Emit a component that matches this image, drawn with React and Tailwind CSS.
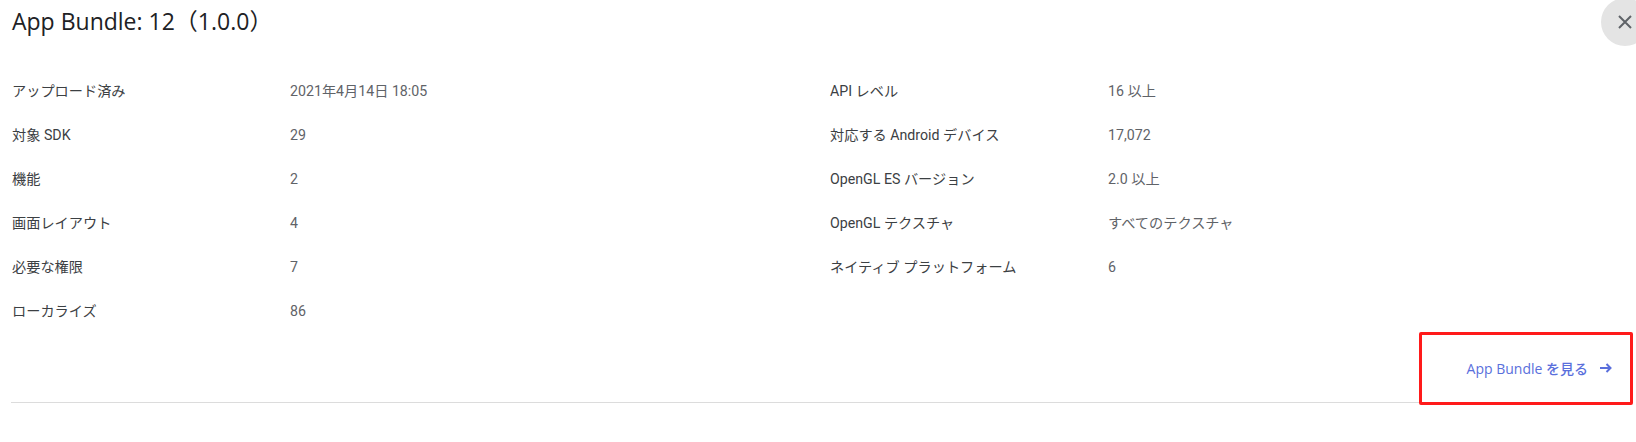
const left = [
  ["アップロード済み", "2021年4月14日 18:05"],
  ["対象 SDK", "29"],
  ["機能", "2"],
  ["画面レイアウト", "4"],
  ["必要な権限", "7"],
  ["ローカライズ", "86"],
];

const right = [
  ["API レベル", "16 以上"],
  ["対応する Android デバイス", "17,072"],
  ["OpenGL ES バージョン", "2.0 以上"],
  ["OpenGL テクスチャ", "すべてのテクスチャ"],
  ["ネイティブ プラットフォーム", "6"],
];

function InfoRow({ label, value }) {
  return (
    <div className="flex items-center h-[44px] text-[14.2px]">
      <div className="w-[278px] shrink-0 text-[#3c4043]">{label}</div>
      <div className="text-[#5f6368]">{value}</div>
    </div>
  );
}

export default function App() {
  return (
    <div className="w-[1636px] h-[442px] bg-white overflow-hidden font-['Roboto','Noto_Sans_CJK_JP',sans-serif]">
      {/* Header */}
      <div className="flex justify-between items-start pl-3">
        <h2 className="pt-[5px] text-[23px] leading-[32px] text-[#202124] font-['Open_Sans','Noto_Sans_CJK_JP',sans-serif]">
          App Bundle: 12（1.0.0）
        </h2>
        <button className="w-12 h-12 -mt-[2px] -mr-[13px] rounded-full bg-[#e4e4e4] flex items-center justify-center">
          <svg width="14" height="14" viewBox="0 0 14 14" fill="none" stroke="#5f6368" strokeWidth="2">
            <path d="M1 1L13 13M13 1L1 13" />
          </svg>
        </button>
      </div>

      {/* Details */}
      <div className="grid grid-cols-[818px_1fr] pl-3 mt-[24px]">
        <div className="flex flex-col">
          {left.map(([l, v]) => (
            <InfoRow key={l} label={l} value={v} />
          ))}
        </div>
        <div className="flex flex-col">
          {right.map(([l, v]) => (
            <InfoRow key={l} label={l} value={v} />
          ))}
        </div>
      </div>

      {/* Footer action */}
      <div className="relative flex justify-end items-center h-[68px]">
        <button className="flex items-center gap-3 pr-6 text-[14px] font-medium text-[#5a6fdc] font-['Open_Sans','Noto_Sans_CJK_JP',sans-serif]">
          <span>App Bundle を見る</span>
          <svg width="12" height="12" viewBox="0 0 12 12" fill="none" stroke="#5a6fdc" strokeWidth="2">
            <path d="M0 6H10.5M6.5 2L10.5 6L6.5 10" />
          </svg>
        </button>
        <div className="absolute top-[-2px] right-[3px] w-[214px] h-[73px] border-[3px] border-[#ff1a1a] rounded-[2px] pointer-events-none" />
      </div>
      <div className="ml-[11px] mr-[6px] h-px bg-[#dcdcdc]" />
    </div>
  );
}
